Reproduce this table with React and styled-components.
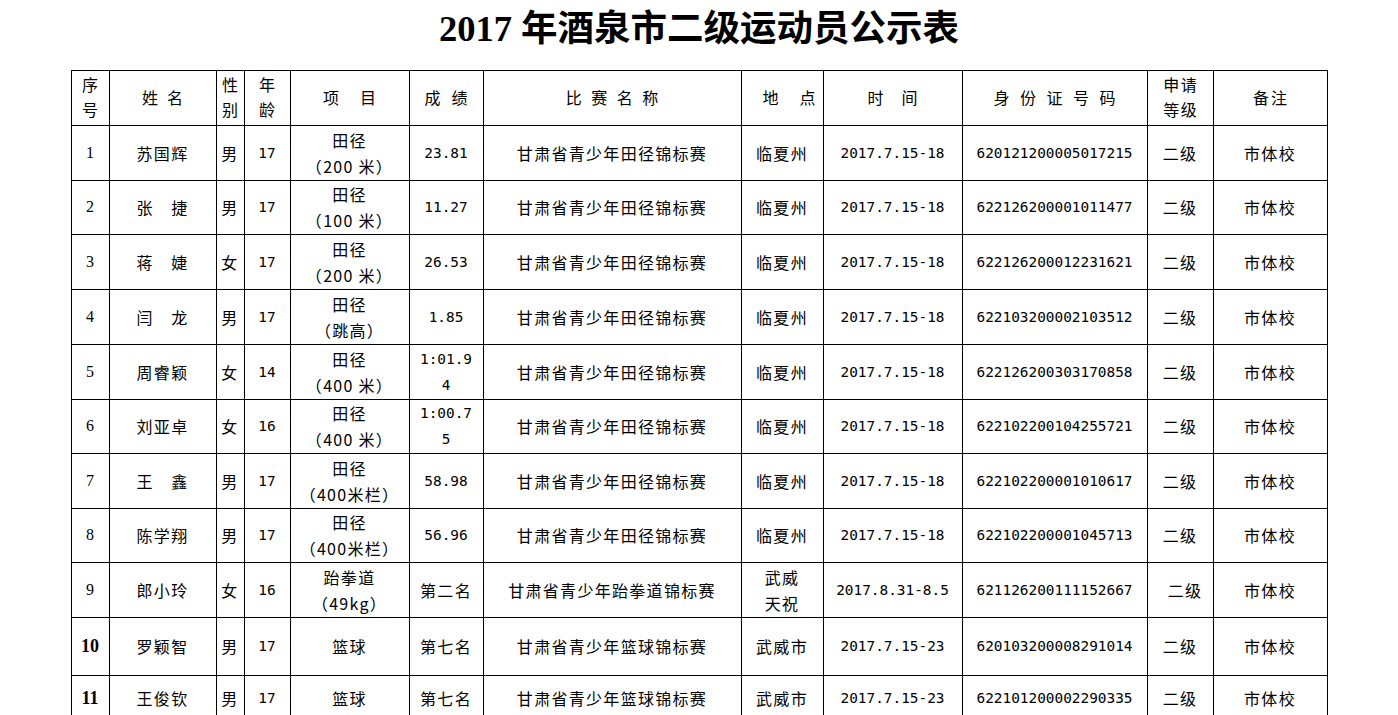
import React from "react";
import styled, { createGlobalStyle } from "styled-components";

const GlobalStyle = createGlobalStyle`
  html, body {
    margin: 0;
    padding: 0;
    background: #ffffff;
  }
  body {
    font-family: "Noto Sans CJK SC", "DejaVu Sans", sans-serif;
    color: #000000;
  }
`;

const cols = [38, 107, 28, 46, 119, 74, 258, 82, 139, 185, 66, 114];

const rows = [
  { no: "1", name: "苏国辉", sex: "男", age: "17", item: ["田径", "（200 米）"], score: ["23.81"], match: "甘肃省青少年田径锦标赛", place: ["临夏州"], date: "2017.7.15-18", id: "620121200005017215", h: 55 },
  { no: "2", name: "张　捷", sex: "男", age: "17", item: ["田径", "（100 米）"], score: ["11.27"], match: "甘肃省青少年田径锦标赛", place: ["临夏州"], date: "2017.7.15-18", id: "622126200001011477", h: 54 },
  { no: "3", name: "蒋　婕", sex: "女", age: "17", item: ["田径", "（200 米）"], score: ["26.53"], match: "甘肃省青少年田径锦标赛", place: ["临夏州"], date: "2017.7.15-18", id: "622126200012231621", h: 55 },
  { no: "4", name: "闫　龙", sex: "男", age: "17", item: ["田径", "（跳高）"], score: ["1.85"], match: "甘肃省青少年田径锦标赛", place: ["临夏州"], date: "2017.7.15-18", id: "622103200002103512", h: 55 },
  { no: "5", name: "周睿颖", sex: "女", age: "14", item: ["田径", "（400 米）"], score: ["1:01.9", "4"], match: "甘肃省青少年田径锦标赛", place: ["临夏州"], date: "2017.7.15-18", id: "622126200303170858", h: 55 },
  { no: "6", name: "刘亚卓", sex: "女", age: "16", item: ["田径", "（400 米）"], score: ["1:00.7", "5"], match: "甘肃省青少年田径锦标赛", place: ["临夏州"], date: "2017.7.15-18", id: "622102200104255721", h: 54 },
  { no: "7", name: "王　鑫", sex: "男", age: "17", item: ["田径", "（400米栏）"], score: ["58.98"], match: "甘肃省青少年田径锦标赛", place: ["临夏州"], date: "2017.7.15-18", id: "622102200001010617", h: 55 },
  { no: "8", name: "陈学翔", sex: "男", age: "17", item: ["田径", "（400米栏）"], score: ["56.96"], match: "甘肃省青少年田径锦标赛", place: ["临夏州"], date: "2017.7.15-18", id: "622102200001045713", h: 54 },
  { no: "9", name: "郎小玲", sex: "女", age: "16", item: ["跆拳道", "（49kg）"], score: ["第二名"], cjkScore: true, match: "甘肃省青少年跆拳道锦标赛", place: ["武威", "天祝"], date: "2017.8.31-8.5", id: "621126200111152667", h: 55, shift: true },
  { no: "10", name: "罗颖智", sex: "男", age: "17", item: ["篮球"], score: ["第七名"], cjkScore: true, match: "甘肃省青少年篮球锦标赛", place: ["武威市"], date: "2017.7.15-23", id: "620103200008291014", h: 58, bold: true },
  { no: "11", name: "王俊钦", sex: "男", age: "17", item: ["篮球"], score: ["第七名"], cjkScore: true, match: "甘肃省青少年篮球锦标赛", place: ["武威市"], date: "2017.7.15-23", id: "622101200002290335", h: 46, bold: true },
];

const headers = [
  { lines: ["序", "号"], ls: 0 },
  { lines: ["姓名"], ls: 9 },
  { lines: ["性", "别"], ls: 0 },
  { lines: ["年", "龄"], ls: 0 },
  { lines: ["项目"], ls: 21 },
  { lines: ["成绩"], ls: 11 },
  { lines: ["比赛名称"], ls: 9.5 },
  { lines: ["地点"], ls: 21 },
  { lines: ["时间"], ls: 18 },
  { lines: ["身份证号码"], ls: 10.5 },
  { lines: ["申请", "等级"], ls: 1.5 },
  { lines: ["备注"], ls: 2 },
];

const Lines = ({ lines }) =>
  lines.map((l, i) => (
    <React.Fragment key={i}>
      {i > 0 && <br />}
      {l}
    </React.Fragment>
  ));

const App = () => {
  return (
    <Page>
      <GlobalStyle />
      <Title>
        <TitleNum>2017 </TitleNum>年酒泉市二级运动员公示表
      </Title>
      <Table>
        <colgroup>
          {cols.map((w, i) => (
            <col key={i} style={{ width: w }} />
          ))}
        </colgroup>
        <thead>
          <Row $h={55}>
            {headers.map((h, i) => (
              <Head key={i} $ls={h.ls}>
                <Lines lines={h.lines} />
              </Head>
            ))}
          </Row>
        </thead>
        <tbody>
          {rows.map((r) => (
            <Row key={r.no} $h={r.h}>
              <NoCell $bold={r.bold}>{r.no}</NoCell>
              <Cell>{r.name}</Cell>
              <Cell>{r.sex}</Cell>
              <NumCell>{r.age}</NumCell>
              <Cell>
                <Lines lines={r.item} />
              </Cell>
              {r.cjkScore ? (
                <Cell>{r.score[0]}</Cell>
              ) : (
                <NumCell>
                  <Lines lines={r.score} />
                </NumCell>
              )}
              <Cell>{r.match}</Cell>
              <Cell>
                <Lines lines={r.place} />
              </Cell>
              <NumCell>{r.date}</NumCell>
              <NumCell>{r.id}</NumCell>
              <Cell $shift={r.shift}>二级</Cell>
              <Cell>市体校</Cell>
            </Row>
          ))}
        </tbody>
      </Table>
    </Page>
  );
};

export default App;

const Page = styled.div`
  width: 1398px;
  padding-bottom: 40px;
`;

const Title = styled.h1`
  margin: 0;
  height: 70px;
  padding-top: 7px;
  box-sizing: border-box;
  text-align: center;
  font-family: "Liberation Serif", "Noto Sans CJK SC", serif;
  font-weight: 700;
  font-size: 36.5px;
  line-height: 44px;
`;

const TitleNum = styled.span`
  font-family: "Liberation Serif", serif;
`;

const Table = styled.table`
  width: 1256px;
  margin: 0 auto;
  border-collapse: collapse;
  table-layout: fixed;
  border: 1px solid #000;
`;

const Row = styled.tr`
  height: ${(p) => p.$h}px;
`;

const Head = styled.th`
  border: 1px solid #000;
  padding: 0 0 2px ${(p) => p.$ls}px;
  font-weight: 400;
  font-size: 16px;
  line-height: 25px;
  letter-spacing: ${(p) => p.$ls}px;
  text-align: center;
  vertical-align: middle;
  white-space: nowrap;
`;

const Cell = styled.td`
  border: 1px solid #000;
  padding: 0 0 1px ${(p) => (p.$shift ? 10 : 0)}px;
  font-size: 16px;
  line-height: 26px;
  letter-spacing: 1.3px;
  text-align: center;
  vertical-align: middle;
  white-space: nowrap;
`;

const NumCell = styled(Cell)`
  font-family: "DejaVu Sans Mono", "Liberation Mono", monospace;
  font-size: 14.4px;
  letter-spacing: 0;
`;

const NoCell = styled(Cell)`
  font-family: "Liberation Serif", serif;
  font-size: ${(p) => (p.$bold ? 18 : 16)}px;
  font-weight: ${(p) => (p.$bold ? 700 : 400)};
  letter-spacing: 0;
`;
